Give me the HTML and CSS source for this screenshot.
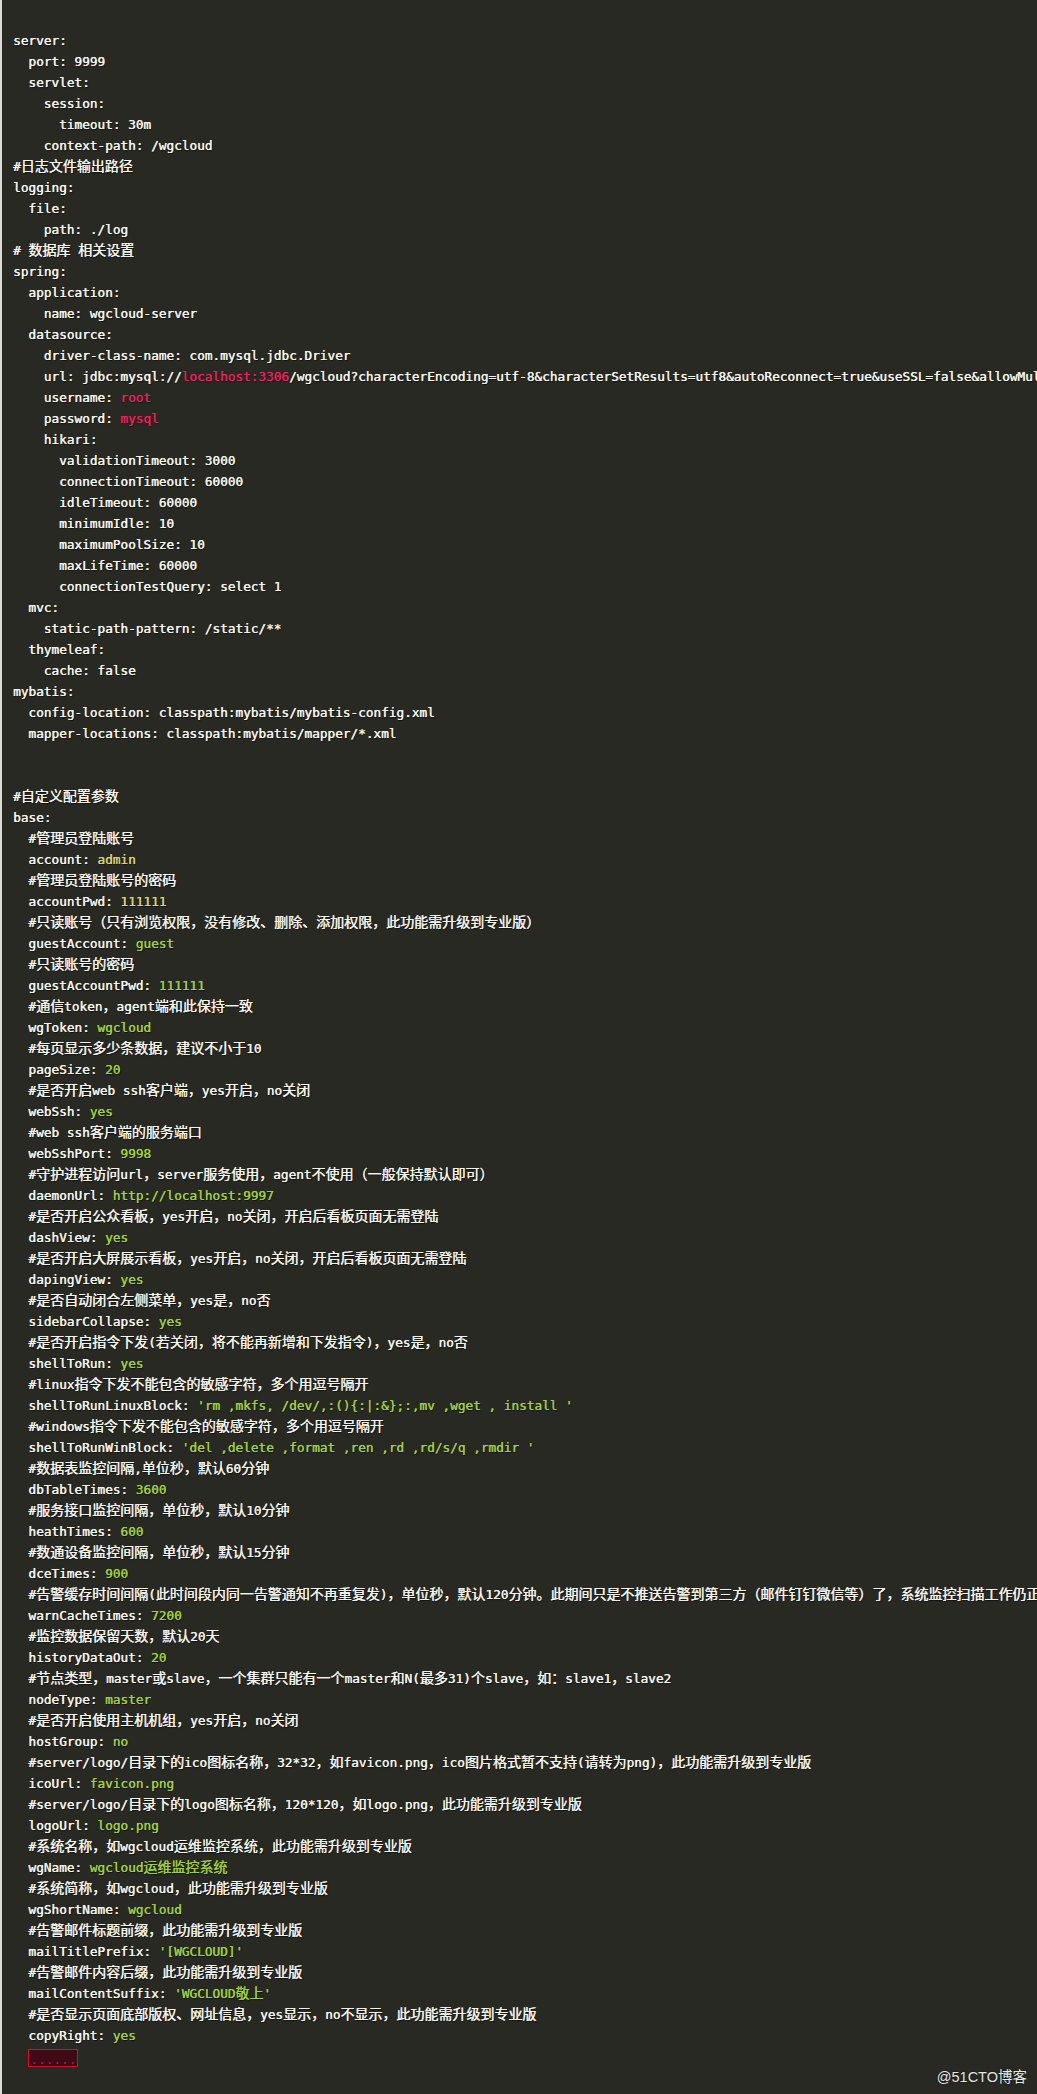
FILE: index.html
```html
<!DOCTYPE html>
<html lang="zh-CN">
<head>
<meta charset="utf-8">
<title>wgcloud application.yml</title>
<link rel="stylesheet" href="styles.css">
</head>
<body>
<div class="code">
<div class="l">server:</div>
<div class="l">  port: 9999</div>
<div class="l">  servlet:</div>
<div class="l">    session:</div>
<div class="l">      timeout: 30m</div>
<div class="l">    context-path: /wgcloud</div>
<div class="l">#<span class="z">日志文件输出路径</span></div>
<div class="l">logging:</div>
<div class="l">  file:</div>
<div class="l">    path: ./log</div>
<div class="l"># <span class="z">数据库</span> <span class="z">相关设置</span></div>
<div class="l">spring:</div>
<div class="l">  application:</div>
<div class="l">    name: wgcloud-server</div>
<div class="l">  datasource:</div>
<div class="l">    driver-class-name: com.mysql.jdbc.Driver</div>
<div class="l">    url: jdbc:mysql://<span class="r">localhost:3306</span>/wgcloud?characterEncoding=utf-8&amp;characterSetResults=utf8&amp;autoReconnect=true&amp;useSSL=false&amp;allowMultiQueries=true</div>
<div class="l">    username: <span class="r">root</span></div>
<div class="l">    password: <span class="r">mysql</span></div>
<div class="l">    hikari:</div>
<div class="l">      validationTimeout: 3000</div>
<div class="l">      connectionTimeout: 60000</div>
<div class="l">      idleTimeout: 60000</div>
<div class="l">      minimumIdle: 10</div>
<div class="l">      maximumPoolSize: 10</div>
<div class="l">      maxLifeTime: 60000</div>
<div class="l">      connectionTestQuery: select 1</div>
<div class="l">  mvc:</div>
<div class="l">    static-path-pattern: /static/**</div>
<div class="l">  thymeleaf:</div>
<div class="l">    cache: false</div>
<div class="l">mybatis:</div>
<div class="l">  config-location: classpath:mybatis/mybatis-config.xml</div>
<div class="l">  mapper-locations: classpath:mybatis/mapper/*.xml</div>
<div class="l"> </div>
<div class="l"> </div>
<div class="l">#<span class="z">自定义配置参数</span></div>
<div class="l">base:</div>
<div class="l">  #<span class="z">管理员登陆账号</span></div>
<div class="l">  account: <span class="y">admin</span></div>
<div class="l">  #<span class="z">管理员登陆账号的密码</span></div>
<div class="l">  accountPwd: <span class="y">111111</span></div>
<div class="l">  #<span class="z">只读账号（只有浏览权限，没有修改、删除、添加权限，此功能需升级到专业版）</span></div>
<div class="l">  guestAccount: <span class="g">guest</span></div>
<div class="l">  #<span class="z">只读账号的密码</span></div>
<div class="l">  guestAccountPwd: <span class="g">111111</span></div>
<div class="l">  #<span class="z">通信</span>token<span class="z">，</span>agent<span class="z">端和此保持一致</span></div>
<div class="l">  wgToken: <span class="g">wgcloud</span></div>
<div class="l">  #<span class="z">每页显示多少条数据，建议不小于</span>10</div>
<div class="l">  pageSize: <span class="g">20</span></div>
<div class="l">  #<span class="z">是否开启</span>web ssh<span class="z">客户端，</span>yes<span class="z">开启，</span>no<span class="z">关闭</span></div>
<div class="l">  webSsh: <span class="g">yes</span></div>
<div class="l">  #web ssh<span class="z">客户端的服务端口</span></div>
<div class="l">  webSshPort: <span class="g">9998</span></div>
<div class="l">  #<span class="z">守护进程访问</span>url<span class="z">，</span>server<span class="z">服务使用，</span>agent<span class="z">不使用（一般保持默认即可）</span></div>
<div class="l">  daemonUrl: <span class="g">http://localhost:9997</span></div>
<div class="l">  #<span class="z">是否开启公众看板，</span>yes<span class="z">开启，</span>no<span class="z">关闭，开启后看板页面无需登陆</span></div>
<div class="l">  dashView: <span class="g">yes</span></div>
<div class="l">  #<span class="z">是否开启大屏展示看板，</span>yes<span class="z">开启，</span>no<span class="z">关闭，开启后看板页面无需登陆</span></div>
<div class="l">  dapingView: <span class="g">yes</span></div>
<div class="l">  #<span class="z">是否自动闭合左侧菜单，</span>yes<span class="z">是，</span>no<span class="z">否</span></div>
<div class="l">  sidebarCollapse: <span class="g">yes</span></div>
<div class="l">  #<span class="z">是否开启指令下发</span>(<span class="z">若关闭，将不能再新增和下发指令</span>)<span class="z">，</span>yes<span class="z">是，</span>no<span class="z">否</span></div>
<div class="l">  shellToRun: <span class="g">yes</span></div>
<div class="l">  #linux<span class="z">指令下发不能包含的敏感字符，多个用逗号隔开</span></div>
<div class="l">  shellToRunLinuxBlock: <span class="g">'rm ,mkfs, /dev/,:(){:|:&amp;};:,mv ,wget , install '</span></div>
<div class="l">  #windows<span class="z">指令下发不能包含的敏感字符，多个用逗号隔开</span></div>
<div class="l">  shellToRunWinBlock: <span class="g">'del ,delete ,format ,ren ,rd ,rd/s/q ,rmdir '</span></div>
<div class="l">  #<span class="z">数据表监控间隔</span>,<span class="z">单位秒，默认</span>60<span class="z">分钟</span></div>
<div class="l">  dbTableTimes: <span class="g">3600</span></div>
<div class="l">  #<span class="z">服务接口监控间隔，单位秒，默认</span>10<span class="z">分钟</span></div>
<div class="l">  heathTimes: <span class="g">600</span></div>
<div class="l">  #<span class="z">数通设备监控间隔，单位秒，默认</span>15<span class="z">分钟</span></div>
<div class="l">  dceTimes: <span class="g">900</span></div>
<div class="l">  #<span class="z">告警缓存时间间隔</span>(<span class="z">此时间段内同一告警通知不再重复发</span>)<span class="z">，单位秒，默认</span>120<span class="z">分钟。此期间只是不推送告警到第三方（邮件钉钉微信等）了，系统监控扫描工作仍正常进行</span></div>
<div class="l">  warnCacheTimes: <span class="g">7200</span></div>
<div class="l">  #<span class="z">监控数据保留天数，默认</span>20<span class="z">天</span></div>
<div class="l">  historyDataOut: <span class="g">20</span></div>
<div class="l">  #<span class="z">节点类型，</span>master<span class="z">或</span>slave<span class="z">，一个集群只能有一个</span>master<span class="z">和</span>N(<span class="z">最多</span>31)<span class="z">个</span>slave<span class="z">，如：</span>slave1<span class="z">，</span>slave2</div>
<div class="l">  nodeType: <span class="g">master</span></div>
<div class="l">  #<span class="z">是否开启使用主机机组，</span>yes<span class="z">开启，</span>no<span class="z">关闭</span></div>
<div class="l">  hostGroup: <span class="g">no</span></div>
<div class="l">  #server/logo/<span class="z">目录下的</span>ico<span class="z">图标名称，</span>32*32<span class="z">，如</span>favicon.png<span class="z">，</span>ico<span class="z">图片格式暂不支持</span>(<span class="z">请转为</span>png)<span class="z">，此功能需升级到专业版</span></div>
<div class="l">  icoUrl: <span class="g">favicon.png</span></div>
<div class="l">  #server/logo/<span class="z">目录下的</span>logo<span class="z">图标名称，</span>120*120<span class="z">，如</span>logo.png<span class="z">，此功能需升级到专业版</span></div>
<div class="l">  logoUrl: <span class="g">logo.png</span></div>
<div class="l">  #<span class="z">系统名称，如</span>wgcloud<span class="z">运维监控系统，此功能需升级到专业版</span></div>
<div class="l">  wgName: <span class="g">wgcloud<span class="z">运维监控系统</span></span></div>
<div class="l">  #<span class="z">系统简称，如</span>wgcloud<span class="z">，此功能需升级到专业版</span></div>
<div class="l">  wgShortName: <span class="g">wgcloud</span></div>
<div class="l">  #<span class="z">告警邮件标题前缀，此功能需升级到专业版</span></div>
<div class="l">  mailTitlePrefix: <span class="g">'[WGCLOUD]'</span></div>
<div class="l">  #<span class="z">告警邮件内容后缀，此功能需升级到专业版</span></div>
<div class="l">  mailContentSuffix: <span class="g">'WGCLOUD<span class="z">敬上</span>'</span></div>
<div class="l">  #<span class="z">是否显示页面底部版权、网址信息，</span>yes<span class="z">显示，</span>no<span class="z">不显示，此功能需升级到专业版</span></div>
<div class="l">  copyRight: <span class="g">yes</span></div>
<div class="l">  <span class="box">......</span></div>
<div class="mark">@51CTO<span class="mz">博客</span></div>
</div>
</body>
</html>
```

FILE: styles.css
```css
html, body {
  margin: 0;
  padding: 0;
  background: #ffffff;
  overflow: hidden;
}

.code {
  position: relative;
  box-sizing: border-box;
  width: 1037px;
  height: 2094px;
  overflow: hidden;
  background: #282923;
  border-left: 2px solid #d9d9d6;
  padding: 30px 0 0 11px;
  font-family: "DejaVu Sans Mono", "Liberation Mono", monospace;
  font-size: 12.74px;
  color: #f3f3ec;
  text-shadow: 0.4px 0 0 currentColor, 1px 1px 1px rgba(0, 0, 0, 0.55);
}

.l {
  height: 21px;
  line-height: 21px;
  white-space: pre;
}

.z {
  font-family: "Noto Sans CJK SC", "Noto Sans CJK JP", sans-serif;
  font-size: 14px;
  line-height: 1;
}

.r {
  color: #e8205f;
}

.y {
  color: #d6d17a;
}

.g {
  color: #9fce44;
}

.box {
  display: inline-block;
  vertical-align: middle;
  box-sizing: border-box;
  height: 18px;
  line-height: 20px;
  padding: 0 1px;
  border: 1px solid #d0102e;
  background: #3e0a18;
  color: #d0102e;
  text-shadow: none;
}

.mark {
  position: absolute;
  right: 10px;
  bottom: 7px;
  font-family: "Liberation Sans", "Noto Sans CJK SC", sans-serif;
  font-size: 14.5px;
  line-height: 20px;
  color: #e6e6e2;
  text-shadow: 0 0 2px rgba(0, 0, 0, 0.7);
}

.mz {
  font-family: "Noto Sans CJK SC", sans-serif;
}
```
